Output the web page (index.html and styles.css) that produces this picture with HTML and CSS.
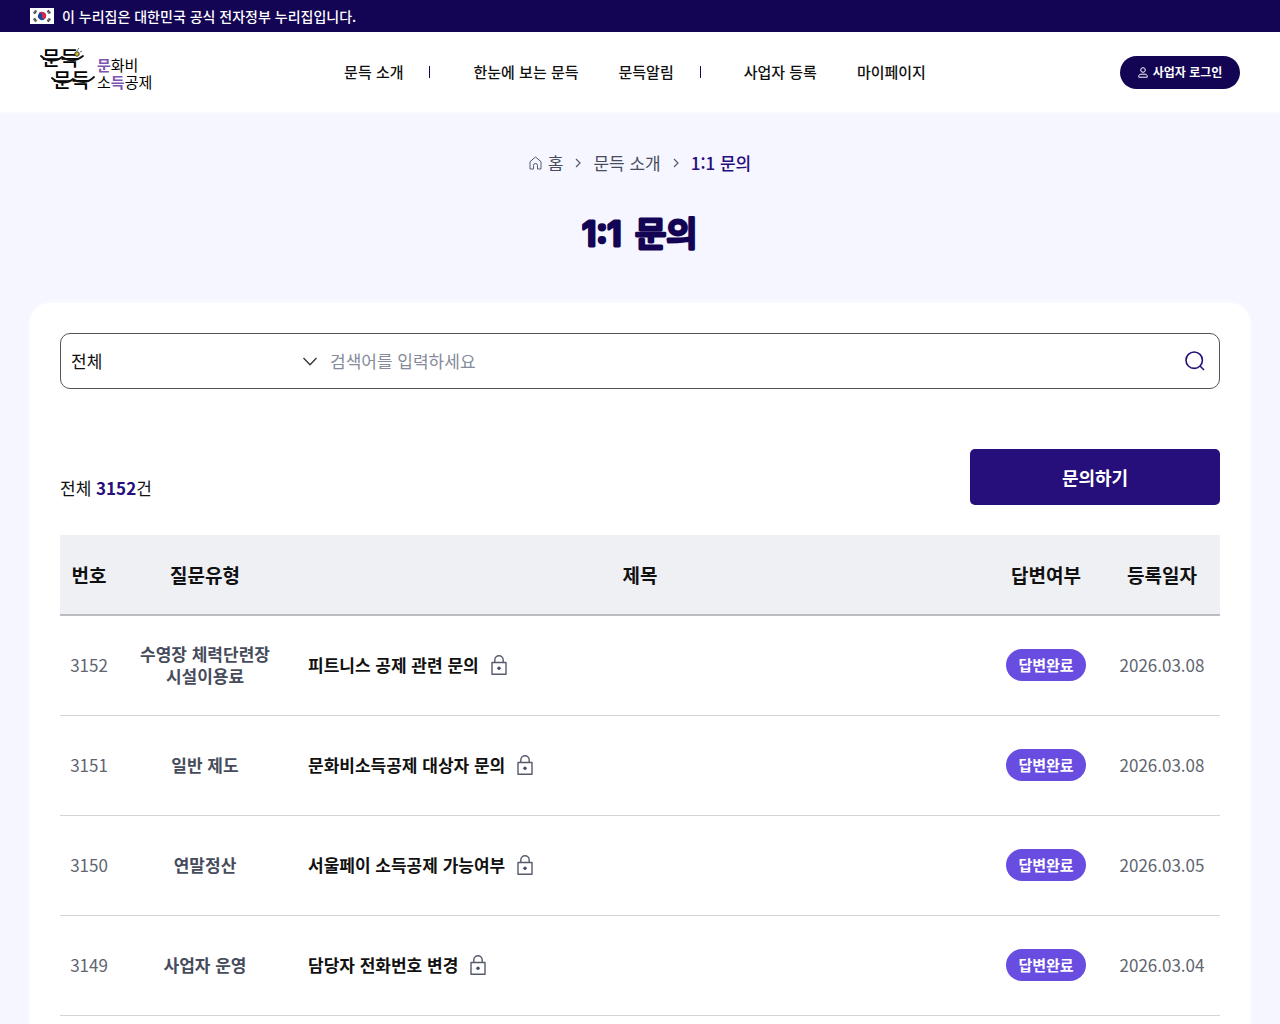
FILE: index.html
```html
<!DOCTYPE html>
<html lang="ko">
<head>
  <meta charset="UTF-8">
  <meta name="viewport" content="width=device-width, initial-scale=1.0">
  <title>1:1 문의</title>
  <link rel="stylesheet" href="styles.css">
</head>
<body>
  <svg width="0" height="0" class="sprite" aria-hidden="true">
    <symbol id="lock" viewBox="0 0 16 20">
      <path d="M1 7.5h14v11.7H1zM3.8 7.5V5a4.2 4.2 0 0 1 8.4 0v2.5" fill="none" stroke="#565b6c" stroke-width="1.4" stroke-linejoin="round"/>
      <circle cx="8" cy="13.3" r="1.7" fill="#464c62"/>
    </symbol>
    <symbol id="arrow" viewBox="0 0 6 10">
      <path d="M1 1l4 4-4 4" fill="none" stroke="#565b6c" stroke-width="1.2"/>
    </symbol>
  </svg>

  <div class="gov-bar">
    <svg class="flag" viewBox="0 0 24 16" aria-hidden="true">
      <rect width="24" height="16" fill="#fff"/>
      <g transform="rotate(25 12 8)">
        <circle cx="12" cy="8" r="4" fill="#17479e"/>
        <path d="M8 8a4 4 0 0 1 8 0a2 2 0 0 1-4 0a2 2 0 0 0-4 0z" fill="#d8294a"/>
      </g>
      <g stroke="#222" stroke-width="2.6" stroke-dasharray="0.8 0.3">
        <path d="M4 5.6l2.2-3"/>
        <path d="M17.8 2.6l2.2 3"/>
        <path d="M4 10.4l2.2 3"/>
        <path d="M17.8 13.4l2.2-3"/>
      </g>
    </svg>
    <span>이 누리집은 대한민국 공식 전자정부 누리집입니다.</span>
  </div>

  <header class="header">
    <a href="#" class="logo" aria-label="문득 문화비 소득공제">
      <svg viewBox="0 0 112 52">
        <g class="logo-mark">
          <text x="2" y="20">문득</text>
          <text x="13" y="42">문득</text>
        </g>
        <g fill="none" stroke="#111" stroke-width="1.8" stroke-linecap="round">
          <path d="M1 10C7 16 16 16 22 11C29 16 37 15 43 10"/>
          <path d="M12 32C18 38 27 38 33 33C40 38 48 37 54 31"/>
        </g>
        <circle cx="37" cy="8" r="2.3" fill="#c3b52b" stroke="#222" stroke-width="0.8"/>
        <path d="M37 5l2-3M40 6l2-1" stroke="#333" stroke-width="0.7"/>
        <g class="logo-text">
          <text x="57" y="25"><tspan class="point">문</tspan>화비</text>
          <text x="57" y="42">소<tspan class="point">득</tspan>공제</text>
        </g>
      </svg>
    </a>
    <nav class="gnb">
      <a href="#" class="divided">문득 소개</a>
      <a href="#">한눈에 보는 문득</a>
      <a href="#" class="divided">문득알림</a>
      <a href="#">사업자 등록</a>
      <a href="#">마이페이지</a>
    </nav>
    <button type="button" class="btn-login">
      <svg viewBox="0 0 10 11" fill="none" stroke="#fff" aria-hidden="true">
        <circle cx="5" cy="3" r="2.3"/>
        <path d="M0.7 10.2V9.5C0.7 7.9 1.8 7.2 3 7.2h4c1.2 0 2.3.7 2.3 2.3v.7z"/>
      </svg>
      사업자 로그인
    </button>
  </header>

  <main>
    <nav class="breadcrumb" aria-label="현재 위치">
      <a href="#" class="home">
        <svg viewBox="0 0 13 14" fill="none" stroke="#565b6c" aria-hidden="true">
          <path d="M1 5.7L6.5 1L12 5.7V13H8.5V9.5a2 2 0 0 0-4 0V13H1z" stroke-linejoin="round"/>
        </svg>
        홈
      </a>
      <svg class="arrow" aria-hidden="true"><use href="#arrow"/></svg>
      <a href="#">문득 소개</a>
      <svg class="arrow" aria-hidden="true"><use href="#arrow"/></svg>
      <a href="#" class="current">1:1 문의</a>
    </nav>
    <h1>
      <svg viewBox="0 0 120 50">
        <text x="2" y="37" class="num">1:1</text>
        <text x="55" y="37">문의</text>
      </svg>
    </h1>

    <section class="panel">
      <form class="search">
        <select name="type" aria-label="질문유형">
          <option>전체</option>
          <option>일반 제도</option>
          <option>연말정산</option>
          <option>사업자 운영</option>
        </select>
        <input type="text" name="keyword" placeholder="검색어를 입력하세요" aria-label="검색어">
        <button type="submit" aria-label="검색">
          <svg viewBox="0 0 20 20" fill="none" stroke="#260f7a" stroke-width="1.6" aria-hidden="true">
            <circle cx="9.2" cy="9.2" r="8.2"/>
            <path d="M15 15l4 4"/>
          </svg>
        </button>
      </form>

      <div class="list-top">
        <p>전체 <strong>3152</strong>건</p>
        <button type="button" class="btn-ask">문의하기</button>
      </div>

      <table>
        <colgroup>
          <col class="col-no">
          <col class="col-type">
          <col class="col-title">
          <col class="col-state">
          <col class="col-date">
        </colgroup>
        <thead>
          <tr><th>번호</th><th>질문유형</th><th>제목</th><th>답변여부</th><th>등록일자</th></tr>
        </thead>
        <tbody>
          <tr>
            <td>3152</td>
            <td class="type">수영장 체력단련장 시설이용료</td>
            <td class="title"><a href="#">피트니스 공제 관련 문의 <svg><use href="#lock"/></svg></a></td>
            <td><span class="badge">답변완료</span></td>
            <td>2026.03.08</td>
          </tr>
          <tr>
            <td>3151</td>
            <td class="type">일반 제도</td>
            <td class="title"><a href="#">문화비소득공제 대상자 문의 <svg><use href="#lock"/></svg></a></td>
            <td><span class="badge">답변완료</span></td>
            <td>2026.03.08</td>
          </tr>
          <tr>
            <td>3150</td>
            <td class="type">연말정산</td>
            <td class="title"><a href="#">서울페이 소득공제 가능여부 <svg><use href="#lock"/></svg></a></td>
            <td><span class="badge">답변완료</span></td>
            <td>2026.03.05</td>
          </tr>
          <tr>
            <td>3149</td>
            <td class="type">사업자 운영</td>
            <td class="title"><a href="#">담당자 전화번호 변경 <svg><use href="#lock"/></svg></a></td>
            <td><span class="badge">답변완료</span></td>
            <td>2026.03.04</td>
          </tr>
        </tbody>
      </table>
    </section>
  </main>
</body>
</html>
```
FILE: styles.css
```css
* {
  margin: 0;
  padding: 0;
  box-sizing: border-box;
}

body {
  font-family: 'Noto Sans CJK KR', 'Noto Sans', sans-serif;
  font-size: 17px;
  line-height: 22px;
  color: #111;
  background: #f5f6ff;
}

a {
  color: inherit;
  text-decoration: none;
}

button, input, select {
  font: inherit;
  border: none;
  background: none;
}

button {
  cursor: pointer;
}

.sprite {
  position: absolute;
}

/* top bar */
.gov-bar {
  display: flex;
  align-items: center;
  gap: 8px;
  height: 32px;
  padding: 0 30px;
  background: #130553;
  color: #fff;
  font-size: 14px;
  font-weight: 500;
}

.flag {
  width: 24px;
  height: 16px;
}

/* header */
.header {
  display: grid;
  grid-template-columns: 1fr auto 1fr;
  align-items: center;
  height: 80px;
  padding: 0 40px;
  background: #fff;
  box-shadow: 0 2px 2px #fafaff;
}

.logo svg {
  display: block;
  width: 112px;
  height: 52px;
  overflow: visible;
}

.logo-mark {
  font-size: 20px;
  font-weight: 500;
}

.logo-text {
  font-size: 15px;
}

.logo-text .point {
  fill: #7d55b0;
  font-weight: 700;
}

.gnb {
  display: flex;
  gap: 40px;
  padding-right: 10px;
  font-size: 15px;
  font-weight: 500;
}

.gnb .divided {
  display: flex;
  align-items: center;
  gap: 26px;
}

.gnb .divided::after {
  content: '';
  width: 1px;
  height: 12px;
  margin-right: 3px;
  background: #130553;
}

.btn-login {
  justify-self: end;
  display: flex;
  align-items: center;
  justify-content: center;
  gap: 5px;
  width: 120px;
  height: 33px;
  border-radius: 17px;
  background: #130553;
  color: #fff;
  font-size: 12px;
  font-weight: 700;
}

.btn-login svg {
  width: 10px;
  height: 11px;
}

/* page title */
.breadcrumb {
  display: flex;
  justify-content: center;
  align-items: center;
  gap: 12px;
  padding-top: 40px;
  color: #464c5c;
}

.breadcrumb .home {
  display: flex;
  align-items: center;
  gap: 6px;
}

.home svg {
  width: 13px;
  height: 14px;
}

.arrow {
  width: 6px;
  height: 10px;
}

.breadcrumb .current {
  color: #260f7a;
  font-weight: 500;
}

h1 {
  margin: 35px 0 44px;
}

h1 svg {
  display: block;
  width: 120px;
  height: 50px;
  margin: 0 auto;
  overflow: visible;
  fill: #130553;
  stroke: #130553;
  stroke-width: 3px;
  stroke-linejoin: round;
  font-size: 34px;
  font-weight: 500;
}

h1 .num {
  font-family: Inter, sans-serif;
  font-weight: 600;
}

/* panel */
.panel {
  margin: 0 30px;
  padding: 30px;
  border-radius: 20px;
  background: #fff;
  box-shadow: 0 0 4px #fff;
}

.search {
  display: flex;
  height: 56px;
  border: 1px solid #555;
  border-radius: 10px;
}

.search select {
  appearance: none;
  width: 260px;
  padding: 0 10px;
  color: #111;
  background: url("data:image/svg+xml,%3Csvg xmlns='http://www.w3.org/2000/svg' width='14' height='9' fill='none' stroke='%23333' stroke-width='1.3'%3E%3Cpath d='M.5 1L7 7.7L13.5 1'/%3E%3C/svg%3E") no-repeat right 4px center;
}

.search input {
  flex: 1;
  min-width: 0;
  padding: 0 9px;
}

.search input::placeholder {
  color: #858b9b;
}

.search button {
  width: 48px;
}

.search button svg {
  display: block;
  width: 20px;
  height: 20px;
  margin: 0 auto;
}

.list-top {
  display: flex;
  justify-content: space-between;
  align-items: flex-end;
  margin: 60px 0 30px;
}

.list-top p {
  padding-bottom: 6px;
}

.list-top strong {
  color: #260f7a;
}

.btn-ask {
  width: 250px;
  height: 56px;
  border-radius: 5px;
  background: #260f7a;
  color: #fff;
  font-size: 18px;
  font-weight: 700;
}

/* list */
table {
  width: 100%;
  table-layout: fixed;
  border-collapse: collapse;
}

.col-no { width: 5%; }
.col-type { width: 15%; }
.col-title { width: 60%; }
.col-state,
.col-date { width: 10%; }

th {
  height: 80px;
  border-bottom: 2px solid #bcbdc3;
  background: #eff0f4;
  font-size: 19px;
  font-weight: 700;
}

td {
  height: 100px;
  border-bottom: 1px solid #d5d5d8;
  color: #60656f;
  text-align: center;
}

td.type {
  padding: 0 16px;
  color: #464c5c;
  font-weight: 700;
  word-break: keep-all;
}

td.title {
  padding: 0 16px;
  color: #111;
  font-weight: 700;
  text-align: left;
}

.title a {
  display: inline-flex;
  align-items: center;
  gap: 12px;
}

.title svg {
  width: 16px;
  height: 20px;
}

.badge {
  display: inline-block;
  padding: 5px 12px;
  border-radius: 16px;
  background: #694de0;
  color: #fff;
  font-size: 15px;
  font-weight: 700;
}
```
